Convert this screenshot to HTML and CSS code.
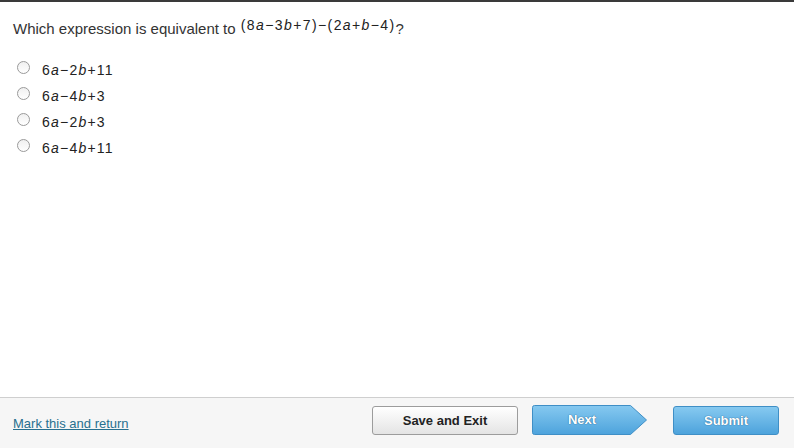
FILE: index.html
```html
<!DOCTYPE html>
<html>
<head>
<meta charset="utf-8">
<link rel="stylesheet" href="styles.css">
</head>
<body>
<div class="page">
  <main class="content">
    <p class="question">Which expression is equivalent to <span class="math raised">(8<i>a</i>−3<i>b</i>+7)−(2<i>a</i>+<i>b</i>−4)</span>?</p>
    <ul class="options">
      <li class="option"><span class="radio"></span><span class="math">6<i>a</i>−2<i>b</i>+11</span></li>
      <li class="option"><span class="radio"></span><span class="math">6<i>a</i>−4<i>b</i>+3</span></li>
      <li class="option"><span class="radio"></span><span class="math">6<i>a</i>−2<i>b</i>+3</span></li>
      <li class="option"><span class="radio"></span><span class="math">6<i>a</i>−4<i>b</i>+11</span></li>
    </ul>
  </main>
  <footer class="footer">
    <a class="mark" href="#">Mark this and return</a>
    <div class="actions">
      <button class="btn btn-save">Save and Exit</button>
      <div class="next">
        <svg class="next-shape" width="116" height="30" viewBox="0 0 116 30">
          <defs>
            <linearGradient id="blueg" x1="0" y1="0" x2="0" y2="1">
              <stop offset="0" stop-color="#86c9f0"/>
              <stop offset="1" stop-color="#4da3dc"/>
            </linearGradient>
          </defs>
          <path d="M2.5 0.5 H98.5 L114.5 15 L98.5 29.5 H2.5 Q0.5 29.5 0.5 27.5 V2.5 Q0.5 0.5 2.5 0.5 Z" fill="url(#blueg)" stroke="#3f8fc6" stroke-width="1"/>
        </svg>
        <span class="next-label">Next</span>
      </div>
      <button class="btn btn-submit">Submit</button>
    </div>
  </footer>
</div>
</body>
</html>
```

FILE: styles.css
```css
html, body {
  margin: 0;
  padding: 0;
  background: #fff;
}
body {
  font-family: "Liberation Sans", Arial, sans-serif;
  color: #333;
}
.page {
  width: 794px;
  height: 448px;
  display: flex;
  flex-direction: column;
  border-top: 2px solid #3a3a3a;
  box-sizing: border-box;
}
.content {
  flex: 1;
  padding: 0 13px;
}
.question {
  margin: 17px 0 0 0;
  font-size: 15px;
  line-height: 20px;
  color: #333;
}
.math {
  font-size: 14px;
  color: #222;
  letter-spacing: 1.2px;
}
.math i {
  font-style: italic;
}
.raised {
  position: relative;
  top: -4px;
  margin-left: 1px;
  letter-spacing: 1.4px;
}
.options {
  list-style: none;
  margin: 18px 0 0 0;
  padding: 0 0 0 5px;
}
.option {
  display: flex;
  align-items: center;
  height: 26px;
}
.radio {
  width: 11px;
  height: 11px;
  border: 1px solid #9a9a9a;
  border-radius: 50%;
  background: linear-gradient(#f0f0f0, #fff);
  margin-left: -1px;
  margin-right: 12px;
  position: relative;
  top: -3px;
  box-sizing: content-box;
}
.footer {
  height: 51px;
  border-top: 1px solid #cfcfcf;
  background: #f6f6f6;
  display: flex;
  align-items: center;
  justify-content: space-between;
  padding: 0 15px 0 13px;
  box-sizing: border-box;
}
.mark {
  color: #28708f;
  font-size: 13px;
  text-decoration: underline;
  margin-top: 1px;
}
.actions {
  display: flex;
  align-items: center;
  margin-top: -6px;
}
.btn {
  font-family: "Liberation Sans", Arial, sans-serif;
  font-weight: bold;
  font-size: 13px;
  height: 29px;
  border-radius: 3px;
  padding: 0;
  cursor: pointer;
}
.btn-save {
  width: 146px;
  color: #222;
  background: linear-gradient(#ffffff, #e4e4e4);
  border: 1px solid #9c9c9c;
  margin-right: 14px;
}
.next {
  display: grid;
  width: 116px;
  height: 30px;
  margin-right: 25px;
}
.next-shape, .next-label {
  grid-area: 1 / 1;
}
.next-label {
  width: 100px;
  font-weight: bold;
  font-size: 13px;
  color: #fff;
  text-align: center;
  line-height: 30px;
  text-shadow: 0 0 1px #2e6f9c, 0 0 1px #2e6f9c;
}
.btn-submit {
  width: 106px;
  color: #fff;
  background: linear-gradient(#86c9f0, #4da3dc);
  border: 1px solid #3f8fc6;
  text-shadow: 0 0 1px #2e6f9c, 0 0 1px #2e6f9c;
}
```
